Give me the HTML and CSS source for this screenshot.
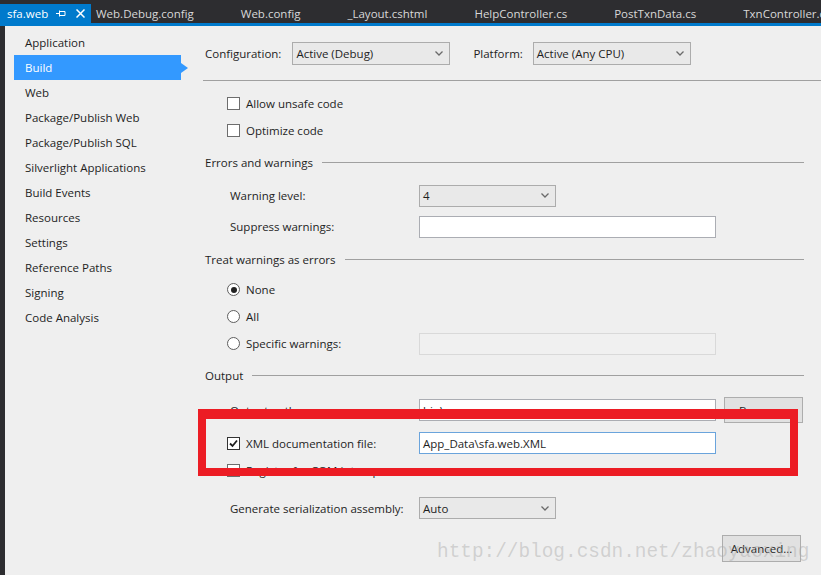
FILE: index.html
```html
<!DOCTYPE html>
<html>
<head>
<meta charset="utf-8">
<link rel="stylesheet" href="styles.css">
</head>
<body>
<div class="tabbar">
  <div class="tab active">
    <span class="tab-name">sfa.web</span>
    <svg class="pin" width="10" height="9" viewBox="0 0 10 9"><path d="M0 4.5H3M3.5 1.5V7.5M3.5 2.5H9V6.5H3.5" fill="none" stroke="#fff" stroke-width="1"/></svg>
    <svg class="close" width="9" height="9" viewBox="0 0 9 9"><path d="M0.5 0.5L8.5 8.5M8.5 0.5L0.5 8.5" stroke="#fff" stroke-width="1.5"/></svg>
  </div>
  <div class="tab">Web.Debug.config</div>
  <div class="tab">Web.config</div>
  <div class="tab">_Layout.cshtml</div>
  <div class="tab">HelpController.cs</div>
  <div class="tab">PostTxnData.cs</div>
  <div class="tab">TxnController.cs</div>
</div>
<div class="tabline"></div>
<div class="main">
  <div class="strip"></div>
  <nav class="sidebar">
    <div class="nav-item">Application</div>
    <div class="nav-item selected">Build</div>
    <div class="nav-item">Web</div>
    <div class="nav-item">Package/Publish Web</div>
    <div class="nav-item">Package/Publish SQL</div>
    <div class="nav-item">Silverlight Applications</div>
    <div class="nav-item">Build Events</div>
    <div class="nav-item">Resources</div>
    <div class="nav-item">Settings</div>
    <div class="nav-item">Reference Paths</div>
    <div class="nav-item">Signing</div>
    <div class="nav-item">Code Analysis</div>
  </nav>
  <section class="content">
    <div class="config-row">
      <span class="cfg-label">Configuration:</span>
      <div class="select sel-config"><span>Active (Debug)</span><svg class="chev" width="8" height="5" viewBox="0 0 8 5"><path d="M0.5 0.5L4 4L7.5 0.5" fill="none" stroke="#6a6a6a" stroke-width="1.3"/></svg></div>
      <span class="cfg-label plat-label">Platform:</span>
      <div class="select sel-config"><span>Active (Any CPU)</span><svg class="chev" width="8" height="5" viewBox="0 0 8 5"><path d="M0.5 0.5L4 4L7.5 0.5" fill="none" stroke="#6a6a6a" stroke-width="1.3"/></svg></div>
    </div>
    <div class="hr"></div>

    <div class="check-row first"><span class="checkbox"></span><span>Allow unsafe code</span></div>
    <div class="check-row"><span class="checkbox"></span><span>Optimize code</span></div>

    <div class="group-head"><span>Errors and warnings</span><span class="group-line"></span></div>
    <div class="group warn-group">
      <div class="field-row tall">
        <span class="field-label">Warning level:</span>
        <div class="select sel-small"><span>4</span><svg class="chev" width="8" height="5" viewBox="0 0 8 5"><path d="M0.5 0.5L4 4L7.5 0.5" fill="none" stroke="#6a6a6a" stroke-width="1.3"/></svg></div>
      </div>
      <div class="field-row tall">
        <span class="field-label">Suppress warnings:</span>
        <div class="input"></div>
      </div>
    </div>

    <div class="group-head after-warn"><span>Treat warnings as errors</span><span class="group-line"></span></div>
    <div class="group">
      <div class="radio-row"><span class="radio checked"></span><span>None</span></div>
      <div class="radio-row"><span class="radio"></span><span>All</span></div>
      <div class="radio-row"><span class="radio"></span><span class="radio-label">Specific warnings:</span><div class="input disabled"></div></div>
    </div>

    <div class="group-head"><span>Output</span><span class="group-line"></span></div>
    <div class="group">
      <div class="field-row out-row">
        <span class="field-label">Output path:</span>
        <div class="input"><span>bin\</span></div>
        <div class="button browse">Browse...</div>
      </div>
      <div class="radio-row xml-row">
        <span class="checkbox checked"><svg width="11" height="11" viewBox="0 0 11 11"><path d="M2 5.5L4.5 8L9 2.5" fill="none" stroke="#1e1e1e" stroke-width="1.8"/></svg></span>
        <span class="radio-label">XML documentation file:</span>
        <div class="input focused"><span>App_Data\sfa.web.XML</span></div>
      </div>
      <div class="check-row com-row"><span class="checkbox"></span><span>Register for COM interop</span></div>
      <div class="field-row gen-row">
        <span class="field-label">Generate serialization assembly:</span>
        <div class="select sel-small"><span>Auto</span><svg class="chev" width="8" height="5" viewBox="0 0 8 5"><path d="M0.5 0.5L4 4L7.5 0.5" fill="none" stroke="#6a6a6a" stroke-width="1.3"/></svg></div>
      </div>
      <div class="adv-row"><div class="button advanced">Advanced...</div></div>
    </div>
  </section>
</div>
<div class="annotation"></div>
<div class="watermark">http://blog.csdn.net/zhaoyaoxing</div>
</body>
</html>
```
FILE: styles.css
```css
* { box-sizing: border-box; }
html, body { margin: 0; padding: 0; }
body {
  width: 821px;
  height: 575px;
  overflow: hidden;
  background: #efefef;
  font-family: "Open Sans", "Noto Sans", sans-serif;
  font-size: 11.5px;
  color: #1e1e1e;
  position: relative;
}
.tabbar {
  height: 23px;
  background: #2d2d30;
  display: flex;
  align-items: flex-end;
  white-space: nowrap;
  overflow: hidden;
}
.tab {
  height: 19px;
  display: flex;
  align-items: center;
  padding: 0 42px 0 5px;
  color: #d8d8d8;
  flex: none;
}
.tab.active {
  background: #007acc;
  color: #fff;
  padding: 0 6px 0 7px;
  width: 91px;
}
.tab-name { margin-right: 8px; }
.pin { margin-right: 10px; flex: none; }
.close { flex: none; }
.tabline { height: 3px; background: #007acc; }
.main { display: flex; height: 549px; }
.strip { width: 5px; background: #2d2d30; flex: none; }
.sidebar { width: 193px; flex: none; padding-top: 4px; }
.nav-item {
  height: 25px;
  line-height: 25px;
  margin-left: 9px;
  padding-left: 11px;
  width: 167px;
  position: relative;
}
.nav-item.selected { background: #3399ff; color: #fff; }
.nav-item.selected::after {
  content: "";
  position: absolute;
  right: -7px;
  top: 8px;
  border-left: 7px solid #3399ff;
  border-top: 5px solid transparent;
  border-bottom: 5px solid transparent;
}
.content { flex: 1; padding-top: 14px; }
.config-row { height: 26px; display: flex; align-items: center; padding-left: 7px; }
.cfg-label { margin-right: 11px; }
.plat-label { margin-left: 23px; margin-right: 10px; }
.select {
  height: 23px;
  border: 1px solid #acacac;
  background: #e9e9e9;
  display: flex;
  align-items: center;
  justify-content: space-between;
  padding: 0 6px 0 3px;
}
.sel-config { width: 158px; }
.sel-small { width: 137px; height: 22px; }
.hr { height: 1px; background: #a0a0a0; margin: 14px 0 0 5px; }
.check-row { height: 27px; display: flex; align-items: center; padding-left: 29px; }
.check-row.first { margin-top: 9px; }
.checkbox {
  width: 13px; height: 13px;
  border: 1px solid #6d6d6d;
  background: #fff;
  margin-right: 6px;
  flex: none;
  display: flex; align-items: center; justify-content: center;
}
.checkbox.checked { border-color: #333; }
.group-head {
  height: 24px;
  margin-top: 6px;
  display: flex;
  align-items: center;
  padding-left: 7px;
  margin-right: 17px;
}
.group-head.after-warn { margin-top: 5px; }
.group-line { flex: 1; height: 1px; background: #a0a0a0; margin-left: 9px; }
.group { margin-top: 5px; }
.group.warn-group { margin-top: 6px; }
.field-row { display: flex; align-items: center; padding-left: 32px; }
.field-row.tall { height: 31px; }
.field-label { width: 189px; flex: none; }
.input {
  width: 297px; height: 22px;
  background: #fff;
  border: 1px solid #abadb3;
  display: flex; align-items: center;
  padding-left: 3px;
  flex: none;
}
.input.disabled { background: #f0f0f0; border-color: #d9d9d9; }
.input.focused { border-color: #6aa4dc; }
.radio-row { height: 27px; display: flex; align-items: center; padding-left: 29px; }
.radio {
  width: 13px; height: 13px;
  border-radius: 50%;
  border: 1px solid #5e5e5e;
  background: #fff;
  margin-right: 6px;
  flex: none;
  position: relative;
}
.radio.checked::after {
  content: "";
  position: absolute;
  left: 2.5px; top: 2.5px;
  width: 6px; height: 6px;
  border-radius: 50%;
  background: #222;
}
.radio-label { width: 173px; flex: none; }
.out-row { height: 34px; margin-top: 6px; }
.button {
  background: #e1e1e1;
  border: 1px solid #adadad;
  display: flex; align-items: center; justify-content: center;
  flex: none;
}
.browse { width: 79px; height: 26px; margin-left: 8px; }
.xml-row { height: 32px; }
.com-row { height: 22px; }
.gen-row { height: 32px; margin-top: 11px; }
.adv-row { display: flex; justify-content: flex-end; padding-right: 20px; margin-top: 11px; }
.advanced { width: 79px; height: 27px; }
.annotation {
  position: absolute;
  left: 198px; top: 409px;
  width: 600px; height: 67px;
  border: 8px solid #ec1c24;
  border-top-width: 10px;
}
.watermark {
  position: absolute;
  left: 437px; top: 541px;
  font-family: "Liberation Mono", monospace;
  font-size: 19.4px;
  color: rgba(170, 170, 170, 0.45);
  white-space: nowrap;
}
```
